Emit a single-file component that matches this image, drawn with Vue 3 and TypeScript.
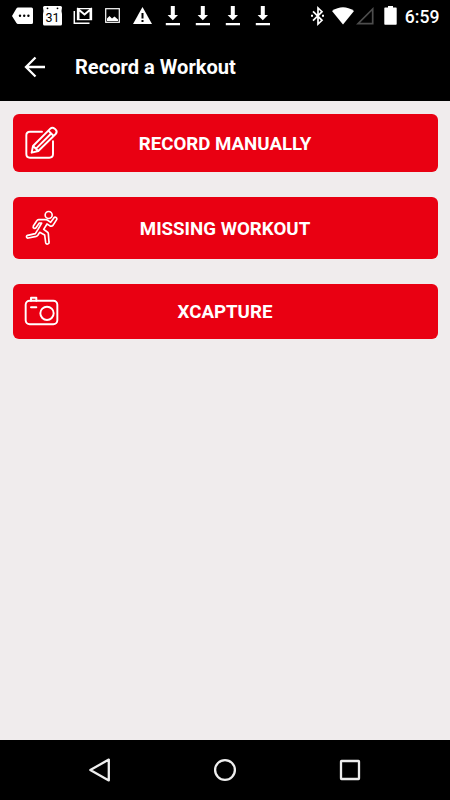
<script setup lang="ts">
interface Action {
  icon: 'edit' | 'run' | 'camera'
  label: string
}

const actions: Action[] = [
  { icon: 'edit', label: 'RECORD MANUALLY' },
  { icon: 'run', label: 'MISSING WORKOUT' },
  { icon: 'camera', label: 'XCAPTURE' },
]
const downloads = 4
</script>

<template>
  <div class="screen">
    <div class="status">
      <div class="notifications">
        <svg viewBox="0 0 30 32"><path fill="#fff" d="M10 7.5H23.5Q25 7.5 25 9V22.5Q25 24 23.5 24H10Q9 24 8.4 23L4 16L8.4 8.5Q9 7.5 10 7.5Z" /><g fill="#000"><circle cx="12" cy="15.7" r="1.2" /><circle cx="16.2" cy="15.7" r="1.2" /><circle cx="20.4" cy="15.7" r="1.2" /></g></svg>
        <svg viewBox="0 0 30 32"><path fill="#fff" d="M6.5 6H22.5Q24 6 24 7.5L23.5 11L24 14V24Q24 25.5 22.5 25.5H6.5Q5 25.5 5 24V14L5.5 11L5 7.5Q5 6 6.5 6Z" /><circle cx="9.5" cy="8.3" r=".9" /><circle cx="19.5" cy="8.3" r=".9" /><text x="14.5" y="21.5" text-anchor="middle" class="day">31</text></svg>
        <svg viewBox="0 0 30 32" fill="none" stroke="#fff"><path stroke-width="1.5" d="M6.3 11V23.3H21.5" /><path stroke-width="1.3" d="M9.5 8.7H23.5V19.7H9.5Z" /><path stroke-width="2" d="M10.5 20V9.5L16.5 14.5L22.5 9.5V20" /></svg>
        <svg viewBox="0 0 30 32"><rect x="7.7" y="8.7" width="13.6" height="13.6" fill="none" stroke="#fff" stroke-width="1.2" /><path fill="#fff" d="M9 21V18.5L11.5 16L14 18.5L16.5 16.5L20 19.5V21Z" /></svg>
        <svg viewBox="0 0 30 32"><path fill="#fff" d="M14.5 7L24 24H5Z" /><path fill="none" stroke="#000" stroke-width="2" d="M14.5 13V18.5M14.5 20V22" /></svg>
        <svg v-for="n in downloads" :key="n" viewBox="0 0 30 32"><path fill="#fff" d="M12.8 6H16.8V15H20L14.8 20.3L9.6 15H12.8ZM7.8 23H22V25.2H7.8Z" /></svg>
      </div>
      <div class="system">
        <svg class="bluetooth" viewBox="0 0 14 32"><path fill="none" stroke="#fff" stroke-width="1.7" d="M2 11.3L11 20.3L7 24V8L11 11.7L2 20.7" /><path fill="#fff" d="M0 14.8H2V16.8H0ZM11 14.8H13V16.8H11Z" /></svg>
        <svg class="wifi" viewBox="0 0 22 32"><path fill="#fff" d="M0 11Q11 3.5 22 11L11 24.5Z" /></svg>
        <svg class="signal" viewBox="0 0 18 32"><path fill="none" stroke="#4d4d4d" stroke-width="1.7" d="M2 23.7H16.7V9Z" /></svg>
        <svg class="battery" viewBox="0 0 13 32"><path fill="#fff" d="M4 6H9V7.5H12Q12.7 7.5 12.7 8.2V24Q12.7 24.7 12 24.7H1Q.3 24.7 .3 24V8.2Q.3 7.5 1 7.5H4Z" /></svg>
        <span class="clock">6:59</span>
      </div>
    </div>

    <header class="bar">
      <svg class="back" viewBox="0 0 22 22"><path fill="none" stroke="#fff" stroke-width="2.3" d="M21 11H2.5M11.5 1.5L2 11L11.5 20.5" /></svg>
      <h1>Record a Workout</h1>
    </header>

    <main>
      <button v-for="action in actions" :key="action.icon" type="button" :class="['action', action.icon]">
        <svg v-if="action.icon === 'edit'" class="icon" viewBox="54 57 114 114">
          <path d="M111 80H75Q64 80 64 91V147Q64 158 75 158H133Q144 158 144 147V109" />
          <path d="M80 143L84 123L136 71Q142 65 149 71L152 74Q158 80 152 87L100 138ZM84 123L100 138M130 77L146 93M93 131L137 87" />
        </svg>
        <svg v-else-if="action.icon === 'run'" class="icon thin" viewBox="54 56 114 114">
          <circle cx="131" cy="74" r="10.5" />
          <path d="M118 88L101 88Q97 88 95 92L85 107Q83 112 87 114Q91 115 93 112L103 98L110 98L99 117L91 130L68 135Q63 137 65 141Q66 144 70 143L94 138Q97 137 99 134L104 126L119 134L122 157Q123 162 128 161Q133 160 132 155L130 130Q130 127 127 125L116 117L126 101L134 106Q140 109 144 105L155 88Q157 83 152 81Q148 79 146 84L137 96L127 89Q123 87 118 88Z" />
        </svg>
        <svg v-else class="icon" viewBox="54 52 114 114">
          <rect x="62" y="78" width="95" height="71" rx="12" />
          <path d="M78 78V69H94V78M78 98H94" />
          <circle cx="126" cy="116" r="20" />
        </svg>
        <span class="label">{{ action.label }}</span>
      </button>
    </main>

    <nav>
      <svg viewBox="0 0 26 26"><path d="M21.8 2.6V23.4L3.3 13Z" /></svg>
      <svg viewBox="0 0 26 26"><circle cx="13" cy="13" r="9.9" /></svg>
      <svg viewBox="0 0 26 26"><rect x="4" y="4" width="18" height="18" rx=".5" /></svg>
    </nav>
  </div>
</template>

<style>
body {
  margin: 0;
}
</style>

<style scoped>
.screen {
  display: flex;
  flex-direction: column;
  width: 450px;
  height: 800px;
  overflow: hidden;
  background: #f0eced;
  font-family: Roboto, sans-serif;
}
.status {
  display: flex;
  justify-content: space-between;
  height: 32px;
  padding: 0 10.5px 0 8px;
  background: #000;
}
.notifications,
.system {
  display: flex;
}
.notifications svg {
  width: 30px;
  height: 32px;
}
.day {
  font-size: 12.5px;
  font-weight: 400;
}
.system svg {
  height: 32px;
}
.bluetooth {
  width: 14px;
  margin-right: 7px;
}
.wifi {
  width: 22px;
  margin-right: 2px;
}
.signal {
  width: 18px;
  margin-right: 10px;
}
.battery {
  width: 13px;
  margin-right: 8px;
}
.clock {
  font-size: 17.6px;
  font-weight: 500;
  line-height: 34px;
  color: #fff;
}
.bar {
  display: flex;
  align-items: center;
  height: 69px;
  box-sizing: border-box;
  padding: 0 24px;
  background: #000;
}
.back {
  width: 22px;
  height: 22px;
}
h1 {
  margin: 0 0 0 29px;
  padding-top: 1px;
  font-size: 20.1px;
  font-weight: 700;
  line-height: 24px;
  color: #fff;
  white-space: nowrap;
}
main {
  display: flex;
  flex: 1;
  flex-direction: column;
  gap: 25px;
  padding: 13px 12.5px;
}
.action {
  display: grid;
  grid-template-columns: 38px 1fr 38px;
  align-items: center;
  box-sizing: border-box;
  width: 100%;
  padding: 0 10.5px;
  border: 0;
  border-radius: 6px;
  background: #e90012;
  color: #fff;
  font-family: inherit;
}
.edit {
  height: 58px;
}
.run {
  height: 61.5px;
}
.camera {
  height: 55px;
}
.icon {
  width: 38px;
  height: 38px;
  fill: none;
  stroke: #fff;
  stroke-width: 5.8;
  stroke-linejoin: round;
  stroke-linecap: round;
}
.thin {
  stroke-width: 5;
}
.label {
  padding-top: 2px;
  font-size: 18.7px;
  font-weight: 700;
  line-height: 22px;
  text-align: center;
}
nav {
  display: flex;
  justify-content: space-between;
  align-items: center;
  height: 60px;
  padding: 0 87px;
  background: #000;
}
nav svg {
  width: 26px;
  height: 26px;
  fill: none;
  stroke: #eee;
  stroke-width: 2.3;
  stroke-linejoin: round;
}
</style>
